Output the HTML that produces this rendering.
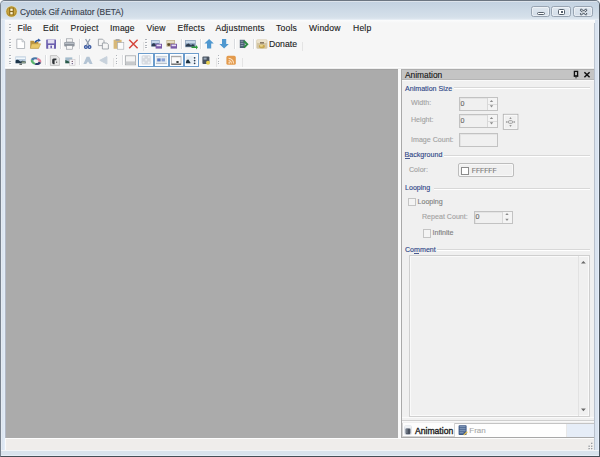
<!DOCTYPE html>
<html><head><meta charset="utf-8">
<style>
*{margin:0;padding:0;box-sizing:border-box}
html,body{width:600px;height:457px;overflow:hidden;background:#fff}
body{position:relative;font-family:"Liberation Sans",sans-serif}
.a{position:absolute}
.tx{white-space:nowrap;line-height:1;-webkit-text-stroke:.12px currentColor}
#win{left:0;top:0;width:600px;height:457px;background:#d6e1ec;border-radius:4px 4px 0 0}
#title{left:20px;top:7.5px;font-size:8.4px;color:#37404c}
.cb{top:6.2px;height:11px;border:1px solid #98a4b2;border-radius:2.5px;background:linear-gradient(#dfe7ef,#d3dde8);box-shadow:inset 0 0 0 1px rgba(255,255,255,.45)}
#client{left:5px;top:20px;width:589px;height:430px;background:#f6f6f6}
.menu{top:23.7px;font-size:8.6px;letter-spacing:.18px;color:#1b1b1b}
#mdi{left:6px;top:69px;width:392px;height:369px;background:#ababab;border-top:1px solid #a2a2a2}
#panel{left:401px;top:69px;width:193px;height:369px;background:#f0f0f0;border-left:1px solid #a9a9a9}
#phead{left:402px;top:69px;width:192px;height:11px;background:#c4c4c4;border-top:1px solid #adadad;border-bottom:1px solid #b5b5b5;box-shadow:0 1px 0 #f9f9f9}
#status{left:5px;top:438px;width:589px;height:12px;background:#efedeb;border-top:1px solid #fcfcfc;border-left:1px solid #fafafa}
.t7{font-size:7.1px}
.gh{color:#2d4586}
.lb{color:#a2a2a2}
.inp{border:1px solid #c2c2c2;background:#f0f0f0;box-shadow:inset 1px 1px 0 #e4e4e4}
.gl{height:2px;border-top:1px solid #d8d8d8;border-bottom:1px solid #fff}
.dot{width:1.8px;height:1.4px;background:#b0b4ba;box-shadow:.8px .8px 0 #fff}
.sep{width:1px;background:#dadcdf;box-shadow:1px 0 0 #fff}
.tb{top:53px;height:14px;border:1px solid #6b9ccc;background:#f2f7fc;box-shadow:inset 0 0 0 1px #fdfeff}
.tend{width:1px;background:#e4e4e4}
</style></head><body>
<div id="win" class="a"></div>
<!-- frame -->
<div class="a" style="left:0;top:0;width:600px;height:457px;border:1px solid #7a8490;border-top-color:#6c7682;border-right-color:#4e5760;border-bottom-color:#464e56;border-radius:5px 5px 0 0"></div>
<div class="a" style="left:1px;top:1px;width:598px;height:18px;background:linear-gradient(#dde4ec 0,#dde4ec 1px,#c3d2e1 1px,#d5e0ea 16px,#dde6ef 18px);border-radius:4px 4px 0 0"></div>
<div class="a" style="left:1px;top:19px;width:598px;height:1px;background:#e6edf4"></div>
<div class="a" style="left:1px;top:20px;width:4px;height:431px;background:linear-gradient(90deg,#e6ecf3 0,#e6ecf3 1px,#d9e3ef 1px,#e4eef9 4px)"></div>
<div class="a" style="left:594px;top:20px;width:5px;height:431px;background:linear-gradient(90deg,#bcc5d1 0,#bcc5d1 1px,#d9e3ef 1px,#d9e3ef 4px,#e6eefa 4px)"></div>
<div class="a" style="left:1px;top:450px;width:598px;height:6px;background:linear-gradient(#f3f5f8 0,#f3f5f8 1px,#d9e3ed 1px,#d9e3ed 5px,#e6eef6 5px)"></div>

<!-- app icon -->
<svg class="a" style="left:5px;top:5px" width="13" height="13" viewBox="0 0 13 13">
<circle cx="6.5" cy="6.5" r="6" fill="#efe2a8" opacity=".6"/>
<circle cx="6.5" cy="6.5" r="5.3" fill="#b08c2a"/>
<circle cx="6.5" cy="6.5" r="4.2" fill="#c9a640"/>
<rect x="4.2" y="2.8" width="4.6" height="7.4" fill="#8a6a18"/>
<rect x="5.3" y="3.6" width="2.4" height="2.3" fill="#fff6d2"/>
<rect x="5.3" y="7.1" width="2.4" height="2.3" fill="#fff6d2"/>
</svg>
<div id="title" class="a tx">Cyotek Gif Animator (BETA)</div>
<div class="a cb" style="left:530.5px;width:19px"><div class="a" style="left:5px;top:4.6px;width:8px;height:3px;border:1px solid #55606c;border-radius:1.5px;background:#fff"></div></div>
<div class="a cb" style="left:551.3px;width:20px"><div class="a" style="left:5.7px;top:1.6px;width:7.5px;height:6.2px;border:1.2px solid #55606c;border-radius:1.5px;background:#fff"></div><div class="a" style="left:8.3px;top:4.2px;width:2.4px;height:1.4px;background:#55606c"></div></div>
<div class="a cb" style="left:573px;width:20px"><svg class="a" style="left:4.6px;top:1.2px" width="10" height="8" viewBox="0 0 10 8"><path d="M2.2 2 L7 6 M7 2 L2.2 6" stroke="#55606c" stroke-width="2.6" stroke-linecap="round"/><path d="M2.2 2 L7 6 M7 2 L2.2 6" stroke="#eef1f4" stroke-width="1" stroke-linecap="round"/></svg></div>

<div id="client" class="a"></div>
<div class="a" style="left:5px;top:20px;width:590px;height:3px;background:linear-gradient(#fbfcfd,#f6f6f6)"></div>
<!-- menu -->
<div class="a dot" style="left:9px;top:24px"></div>
<div class="a dot" style="left:9px;top:27px"></div>
<div class="a dot" style="left:9px;top:29.5px"></div>
<div class="a tx menu" style="left:17.5px">File</div>
<div class="a tx menu" style="left:43px">Edit</div>
<div class="a tx menu" style="left:70.5px">Project</div>
<div class="a tx menu" style="left:110px">Image</div>
<div class="a tx menu" style="left:146.5px">View</div>
<div class="a tx menu" style="left:177.5px">Effects</div>
<div class="a tx menu" style="left:215.5px">Adjustments</div>
<div class="a tx menu" style="left:276px">Tools</div>
<div class="a tx menu" style="left:309px">Window</div>
<div class="a tx menu" style="left:353px">Help</div>

<!-- toolbar grips -->
<div class="a dot" style="left:9px;top:39px"></div>
<div class="a dot" style="left:9px;top:42px"></div>
<div class="a dot" style="left:9px;top:44.5px"></div>
<div class="a dot" style="left:9px;top:47px"></div>
<div class="a dot" style="left:9px;top:55px"></div>
<div class="a dot" style="left:9px;top:58px"></div>
<div class="a dot" style="left:9px;top:60.5px"></div>
<div class="a dot" style="left:9px;top:63px"></div>
<div class="a dot" style="left:145px;top:39px"></div>
<div class="a dot" style="left:145px;top:42px"></div>
<div class="a dot" style="left:145px;top:44.5px"></div>
<div class="a dot" style="left:145px;top:47px"></div>
<div class="a dot" style="left:115.5px;top:55px"></div>
<div class="a dot" style="left:115.5px;top:58px"></div>
<div class="a dot" style="left:115.5px;top:60.5px"></div>
<div class="a dot" style="left:115.5px;top:63px"></div>
<div class="a dot" style="left:217.5px;top:55px"></div>
<div class="a dot" style="left:217.5px;top:58px"></div>
<div class="a dot" style="left:217.5px;top:60.5px"></div>
<div class="a dot" style="left:217.5px;top:63px"></div>
<!-- separators -->
<div class="a sep" style="left:60px;top:39px;height:10px"></div>
<div class="a sep" style="left:79px;top:39px;height:10px"></div>
<div class="a sep" style="left:181px;top:39px;height:10px"></div>
<div class="a sep" style="left:200px;top:39px;height:10px"></div>
<div class="a sep" style="left:234px;top:39px;height:10px"></div>
<div class="a sep" style="left:253px;top:39px;height:10px"></div>
<div class="a tend" style="left:143px;top:42px;height:9px"></div>
<div class="a tend" style="left:302px;top:42px;height:9px"></div>
<div class="a sep" style="left:45px;top:55px;height:10px"></div>
<div class="a sep" style="left:79px;top:55px;height:10px"></div>
<div class="a sep" style="left:121.5px;top:55px;height:10px"></div>
<div class="a tend" style="left:112.5px;top:58px;height:9px"></div>
<div class="a tend" style="left:215.5px;top:58px;height:9px"></div>
<div class="a tend" style="left:241.5px;top:58px;height:9px"></div>

<!-- toolbar icons (page coords) -->
<svg class="a" style="left:0;top:0" width="310" height="69" viewBox="0 0 310 69">
<!-- new -->
<path d="M16.8 39.2 H22 L24.6 41.8 V48.5 H16.8 Z" fill="#fff" stroke="#a4a9b0" stroke-width=".8"/>
<path d="M22 39.2 V41.8 H24.6" fill="#e6e8ec" stroke="#a4a9b0" stroke-width=".6"/>
<!-- open -->
<path d="M30.3 40.8 H33.6 L34.4 41.8 H38.4 V48.3 H30.3 Z" fill="#b8923e"/>
<path d="M31.6 43.8 H40.6 L38.6 48.4 H30.3 Z" fill="#e9c868" stroke="#b08a3a" stroke-width=".5"/>
<path d="M35.2 42.6 Q36 40.2 38.8 40.2" stroke="#28529c" stroke-width="1.4" fill="none"/>
<path d="M38 38.6 L40.8 40.2 L38.4 42 Z" fill="#28529c"/>
<!-- save -->
<rect x="46.2" y="39.4" width="9.8" height="9.4" rx=".6" fill="#6b5eae"/>
<rect x="47.8" y="39.6" width="6.6" height="3.8" fill="#e2def0"/>
<rect x="48.2" y="45" width="5.8" height="3.8" fill="#efedf5"/>
<rect x="50.4" y="45.6" width="1.6" height="2.6" fill="#6b5eae"/>
<!-- print -->
<rect x="66.5" y="38.8" width="5.8" height="3.2" fill="#f4f4f4" stroke="#8a9098" stroke-width=".6"/>
<rect x="64.2" y="42" width="10.4" height="4.6" rx="1" fill="#8c939c"/>
<rect x="65" y="42.6" width="8.8" height="1.4" fill="#b8bec6"/>
<rect x="66.3" y="45.6" width="6.2" height="3.6" fill="#f6f6f6" stroke="#8a9098" stroke-width=".6"/>
<!-- cut -->
<path d="M85.6 39 L89 45 M90 39 L86.6 45" stroke="#8a96a8" stroke-width="1.2"/>
<circle cx="85.9" cy="46.9" r="2" fill="#2f4f9a"/>
<circle cx="89.5" cy="46.9" r="2" fill="#2f4f9a"/>
<circle cx="85.9" cy="47.1" r=".8" fill="#c8d4ee"/>
<circle cx="89.5" cy="47.1" r=".8" fill="#c8d4ee"/>
<!-- copy -->
<path d="M98.4 39.2 H102.6 L104 40.6 V45.6 H98.4 Z" fill="#f6f6f6" stroke="#8e949c" stroke-width=".8"/>
<path d="M102.4 43 H106.8 L108.4 44.6 V49 H102.4 Z" fill="#f6f6f6" stroke="#8e949c" stroke-width=".8"/>
<!-- paste -->
<rect x="113.6" y="39.8" width="8" height="9" fill="#d8b878"/>
<rect x="115.6" y="39" width="4" height="2" fill="#a8a8a8"/>
<rect x="117.4" y="42.6" width="6.4" height="6.6" fill="#fbfbfb" stroke="#a0a6ae" stroke-width=".6"/>
<!-- delete -->
<path d="M129.2 39.8 L137.6 48.2 M137.6 39.8 L129.2 48.2" stroke="#d4443a" stroke-width="1.45"/>
<!-- img save -->
<rect x="151.2" y="40" width="8.4" height="6.6" fill="#7e98b8"/>
<rect x="151.8" y="40.6" width="7.2" height="2.4" fill="#c8d8ea"/>
<path d="M151.6 44.5 L154 43 L156 45 L158 43.6 L159.2 46.2 H151.6Z" fill="#2c3c52"/>
<rect x="155.6" y="43.8" width="6.4" height="4.8" fill="#7a5aa8"/>
<rect x="156.6" y="44.6" width="4.4" height="1.6" fill="#e8e0f4"/>
<!-- img save as -->
<rect x="166.5" y="40" width="8.4" height="6.6" fill="#b8a880"/>
<rect x="167.1" y="40.6" width="7.2" height="2.4" fill="#e4dcc4"/>
<circle cx="168.8" cy="44.6" r="1.4" fill="#5a4a2a"/>
<rect x="170.6" y="43.8" width="6.4" height="4.8" fill="#7a5aa8"/>
<rect x="171.6" y="44.6" width="4.4" height="1.6" fill="#e8e0f4"/>
<!-- export -->
<rect x="185.2" y="40" width="10.4" height="7.2" fill="#7890ac"/>
<rect x="185.8" y="40.6" width="9.2" height="2.8" fill="#c8d8e8"/>
<path d="M185.8 45 L188.5 43.6 L191 45.6 L193 44 L195 46.6 H185.8Z" fill="#2a3a4c"/>
<path d="M191.5 46.5 H196 V45 L198 47.3 L196 49.4 V48 H191.5Z" fill="#2c9a3a"/>
<!-- up -->
<path d="M209.1 39 L213.8 43.6 H211.2 V48.6 H207 V43.6 H204.4 Z" fill="#4f98d0"/>
<!-- down -->
<path d="M224.1 48.6 L228.8 44 H226.2 V39 H222 V44 H219.4 Z" fill="#4f98d0"/>
<!-- goto -->
<rect x="239.8" y="39.8" width="5" height="8.2" fill="#4c6076"/>
<path d="M240.6 41.2 H243.4 M240.6 43.4 H243.4 M240.6 45.6 H243.4" stroke="#a4b4c4" stroke-width=".8"/>
<path d="M244 41 L247.2 44.2 L244 47.6" fill="none" stroke="#2e8c44" stroke-width="2"/>
<!-- donate -->
<rect x="256.4" y="39.4" width="11" height="9.4" rx="1.4" fill="#d4c6a4"/>
<rect x="257" y="40" width="9.8" height="3" rx="1" fill="#ebe2cc"/>
<rect x="260" y="42" width="4" height="1.6" fill="#8a7a62"/>
<ellipse cx="261.9" cy="46.4" rx="3" ry="1.8" fill="#c8a850"/>
<ellipse cx="261.4" cy="45.8" rx="1.6" ry="1" fill="#e8d488"/>
<!-- row 2 -->
<rect x="15.4" y="56.4" width="10.4" height="6.8" fill="#b8cadc"/>
<rect x="16" y="57.4" width="9.2" height="1.6" fill="#f2f8fc"/>
<path d="M15.6 63.2 V60.6 Q16.6 59.2 18.4 60 L20.4 61.4 L22.6 60.8 L25.6 61.6 V63.2Z" fill="#1c3448"/>
<rect x="21.6" y="61.4" width="4" height="1.8" fill="#8a9a84"/>
<rect x="19.4" y="63.4" width="2.6" height="1.6" fill="#6a726e"/>
<!-- color ring -->
<g transform="translate(36 61.2) rotate(15) scale(1 .7)">
<circle r="4" fill="none" stroke="#2a3c6c" stroke-width="2.8" stroke-dasharray="6.3 20"/>
<circle r="4" fill="none" stroke="#5ab46e" stroke-width="2.8" stroke-dasharray="6.3 20" stroke-dashoffset="-6.3"/>
<circle r="4" fill="none" stroke="#4a78a8" stroke-width="2.8" stroke-dasharray="6.3 20" stroke-dashoffset="-12.6"/>
<circle r="4" fill="none" stroke="#e0849c" stroke-width="2.8" stroke-dasharray="6.3 20" stroke-dashoffset="-18.9"/>
</g>
<!-- doc dark -->
<path d="M50.4 55.6 H56.8 L59.4 58.2 V65.4 H50.4Z" fill="#e8e8e8" stroke="#a8a8a8" stroke-width=".6"/>
<path d="M56.4 58.4 H53.6 Q52.2 58.4 52.2 60 V62.8 Q52.2 64.2 53.6 64.2 H54.6 V60.2 H56.4Z" fill="#2e3236"/>
<rect x="56" y="61.6" width="1.2" height="1.2" fill="#5a5a5a"/>
<!-- small image -->
<rect x="65.3" y="57.4" width="7" height="5.8" fill="#a4bccc"/>
<path d="M65.3 60 L69 61.6 L71.5 63.2 H65.3Z" fill="#2a5a48"/>
<rect x="69.6" y="59.6" width="5.4" height="5.6" fill="#f6f4f6" stroke="#c4c0c4" stroke-width=".5"/>
<circle cx="72.3" cy="61.4" r=".7" fill="#7a5a6a"/>
<circle cx="72.3" cy="63.6" r=".7" fill="#5a4a7a"/>
<!-- flip A -->
<path d="M86.6 56.8 H89.4 L92.6 64 H89.8 L88 61.6 L86.2 64 H83.4Z" fill="#b4c4d4"/>
<!-- left tri -->
<path d="M99.8 60.3 L106.9 56.6 V64 Z" fill="#c8d2dc" stroke="#c8d2dc" stroke-width="1" stroke-linejoin="round"/>
<!-- frame -->
<rect x="125.4" y="55.8" width="10.2" height="9" fill="#f4f4f4" stroke="#a4a8ac" stroke-width=".8"/>
<rect x="125.8" y="61.4" width="9.4" height="3" fill="#c8cacc"/>
</svg>

<!-- highlighted toggle buttons -->
<div class="a tb" style="left:138.3px;width:15.3px"></div>
<div class="a tb" style="left:153.6px;width:15.1px"></div>
<div class="a tb" style="left:168.7px;width:15.1px"></div>
<div class="a tb" style="left:183.8px;width:14.8px"></div>
<svg class="a" style="left:0;top:0" width="250" height="69" viewBox="0 0 250 69">
<rect x="141.6" y="55.2" width="9.2" height="9.2" rx="1.5" fill="#d6dae0"/>
<g fill="#eef1f4"><circle cx="143.6" cy="57.2" r="1"/><circle cx="148.8" cy="57.2" r="1"/><circle cx="146.2" cy="59.8" r="1"/><circle cx="143.6" cy="62.4" r="1"/><circle cx="148.8" cy="62.4" r="1"/></g>
<rect x="155.9" y="56" width="11" height="7.8" fill="#e2e8ee"/>
<rect x="155.9" y="56" width="11" height=".8" fill="#c4ccd4"/>
<rect x="155.9" y="63" width="11" height=".8" fill="#aeb8c2"/>
<rect x="157.2" y="58.4" width="3.4" height="3" fill="#5a7cc4"/>
<rect x="161.6" y="58.4" width="3.4" height="3" fill="#8aa4d8"/>
<rect x="171.4" y="56.2" width="9.6" height="8.3" fill="#fafafa" stroke="#9a9a9a" stroke-width=".6"/>
<rect x="171.4" y="56" width="9.6" height="1.2" fill="#a8a8a8"/>
<rect x="171.4" y="63.6" width="9.6" height="1" fill="#4a4a4a"/>
<rect x="176.4" y="61" width="2.2" height="2" fill="#3a4040"/>
<rect x="185.9" y="56.2" width="6.8" height="8" fill="#e4ecf2"/>
<path d="M185.9 62.2 Q186.4 59 188.4 59.6 L190.4 62.4 V63.2 H185.9Z" fill="#1e3240"/>
<circle cx="194.6" cy="57.8" r=".9" fill="#2a3e54"/><circle cx="194.6" cy="60.6" r=".9" fill="#2a3e54"/><circle cx="194.6" cy="63.3" r=".9" fill="#2a3e54"/>
<!-- dark w/ star -->
<rect x="202.4" y="56.4" width="7" height="7.6" rx="1" fill="#4a5460"/>
<rect x="203.6" y="57.6" width="3" height="2" fill="#9aa8b8"/>
<circle cx="208" cy="62.8" r="2" fill="#e8d050"/>
<!-- rss -->
<rect x="226.4" y="55.8" width="9.4" height="9" rx="1.6" fill="#e39a4c"/>
<path d="M228.6 58.4 A5 5 0 0 1 233.6 63.4 M228.6 60.6 A2.8 2.8 0 0 1 231.4 63.4" stroke="#fbe0c0" stroke-width="1.1" fill="none"/>
<circle cx="229.2" cy="62.8" r=".9" fill="#fbe0c0"/>
</svg>
<div class="a tx" style="left:269px;top:39.6px;font-size:8.7px;color:#1b1b1b">Donate</div>

<!-- MDI -->
<div class="a" style="left:5px;top:67px;width:589px;height:1px;background:#fdfdfd"></div><div class="a" style="left:5px;top:68px;width:589px;height:1px;background:#eeeeee"></div>
<div class="a" style="left:5px;top:69px;width:1px;height:369px;background:#b3b9c6"></div>
<div id="mdi" class="a"></div>
<div class="a" style="left:398px;top:69px;width:3px;height:369px;background:#fafafa"></div>

<!-- panel -->
<div id="panel" class="a"></div>
<div class="a" style="left:594px;top:69px;width:1px;height:369px;background:#b8c0cc"></div>
<div id="phead" class="a"></div>
<div class="a tx" style="left:405px;top:70.6px;font-size:8.4px;color:#151515">Animation</div>
<svg class="a" style="left:570px;top:69px" width="24" height="11" viewBox="0 0 24 11">
<rect x="4.4" y="2.4" width="3.2" height="4.6" fill="none" stroke="#111" stroke-width="1.3"/>
<rect x="3.8" y="6.6" width="4.4" height="1" fill="#111"/>
<rect x="5.5" y="7.4" width="1" height="2" fill="#333"/>
<path d="M14.4 3.2 L19.6 8.2 M19.6 3.2 L14.4 8.2" stroke="#111" stroke-width="1.5"/>
</svg>

<div class="a tx t7 gh" style="left:405px;top:85.6px">Animation Size</div>
<div class="a gl" style="left:454px;top:87px;width:136px"></div>
<div class="a tx t7 lb" style="left:411px;top:99.5px">Width:</div>
<div class="a tx t7 lb" style="left:411px;top:117px">Height:</div>
<div class="a tx t7 lb" style="left:411px;top:137px">Image Count:</div>
<div class="a inp" style="left:459px;top:97px;width:38.5px;height:14px"></div>
<div class="a inp" style="left:459px;top:114px;width:38.5px;height:14px"></div>
<div class="a inp" style="left:459px;top:133px;width:38.5px;height:14px"></div>
<div class="a tx t7" style="left:460.5px;top:100.5px;color:#666">0</div>
<div class="a tx t7" style="left:460.5px;top:117.5px;color:#666">0</div>
<div class="a" style="left:487px;top:98px;width:10px;height:12px;border-left:1px solid #d8d8d8;background:#f4f4f4"></div>
<div class="a" style="left:487px;top:115px;width:10px;height:12px;border-left:1px solid #d8d8d8;background:#f4f4f4"></div>
<div class="a" style="left:488px;top:103.5px;width:9px;height:1px;background:#dcdcdc"></div>
<div class="a" style="left:488px;top:120.5px;width:9px;height:1px;background:#dcdcdc"></div>
<svg class="a" style="left:484px;top:95px" width="40" height="40" viewBox="0 0 40 40">
<path d="M5.8 7 L7.5 4.9 L9.2 7Z M5.8 10.3 L7.5 12.4 L9.2 10.3Z M5.8 24 L7.5 21.9 L9.2 24Z M5.8 27.3 L7.5 29.4 L9.2 27.3Z" fill="#8c8c8c"/>
<rect x="19.3" y="19.3" width="14.6" height="15" fill="#f0f0f0" stroke="#b0b0b0" stroke-width=".9"/>
<rect x="20.3" y="20.3" width="12.6" height="13" fill="none" stroke="#fbfbfb" stroke-width=".8"/>
<path d="M22.6 27 H30.6" stroke="#c4c4c4" stroke-width=".7"/>
<rect x="24.4" y="25.6" width="4.2" height="2.8" rx="1.2" fill="#e8e8e8" stroke="#8a8a8a" stroke-width=".7"/>
<path d="M25.3 23.8 L26.5 22.2 L27.7 23.8Z M25.3 30.2 L26.5 31.8 L27.7 30.2Z M23.2 25.9 L21.8 27 L23.2 28.1Z M29.8 25.9 L31.2 27 L29.8 28.1Z" fill="#7a7a7a"/>
</svg>

<div class="a tx t7 gh" style="left:404.5px;top:152px">Background</div>
<div class="a" style="left:405px;top:158.4px;width:4.5px;height:.6px;background:#4a5a90"></div>
<div class="a gl" style="left:444px;top:154.5px;width:146px"></div>
<div class="a tx t7 lb" style="left:409px;top:167px">Color:</div>
<div class="a" style="left:458px;top:163px;width:56px;height:14px;border:1px solid #bdbdbd;border-radius:2px;background:#f0f0f0;box-shadow:inset 0 0 0 1px #f8f8f8"></div>
<div class="a" style="left:461px;top:167px;width:8px;height:8px;border:1px solid #8c8c8c;background:#fff"></div>
<div class="a tx" style="left:471.8px;top:168.2px;font-size:6.75px;color:#7a7a7a">FFFFFF</div>

<div class="a tx t7 gh" style="left:405px;top:185.2px">Looping</div>
<div class="a gl" style="left:434px;top:187.5px;width:156px"></div>
<div class="a" style="left:407.5px;top:197.5px;width:8.5px;height:8.5px;border:1px solid #c4c4c4;background:#f4f4f4"></div>
<div class="a tx t7" style="left:417.5px;top:199.2px;color:#7e7e7e">Looping</div>
<div class="a tx t7 lb" style="left:422px;top:214.4px">Repeat Count:</div>
<div class="a inp" style="left:474px;top:210.5px;width:38.5px;height:13.5px"></div>
<div class="a tx t7" style="left:475.5px;top:213.5px;color:#666">0</div>
<div class="a" style="left:502px;top:211.5px;width:10px;height:11.5px;border-left:1px solid #d8d8d8;background:#f4f4f4"></div>
<svg class="a" style="left:502px;top:211px" width="10" height="13" viewBox="0 0 10 13"><path d="M3.3 4 L5 1.9 L6.7 4Z M3.3 7.8 L5 9.9 L6.7 7.8Z" fill="#8c8c8c"/></svg>
<div class="a" style="left:422.5px;top:229px;width:8.5px;height:8.5px;border:1px solid #c4c4c4;background:#f4f4f4"></div>
<div class="a tx t7" style="left:432.5px;top:230.2px;color:#7e7e7e">Infinite</div>

<div class="a tx t7 gh" style="left:405px;top:246.5px">Comment</div>
<div class="a" style="left:414.2px;top:253.2px;width:4.8px;height:.6px;background:#4a5a90"></div>
<div class="a gl" style="left:437px;top:249px;width:153px"></div>
<div class="a" style="left:409px;top:255px;width:181px;height:162px;border:1px solid #cfcfcf;background:#f0f0f0;box-shadow:inset 0 0 0 1px #fafafa"></div>
<div class="a" style="left:577.5px;top:256px;width:1px;height:160px;background:#e2e2e2"></div>
<svg class="a" style="left:578px;top:256px" width="11" height="160" viewBox="0 0 11 160"><path d="M3 7.6 L5.4 5 L7.8 7.6Z M3 152.6 L5.4 155.2 L7.8 152.6Z" fill="#6a6a6a"/></svg>
<div class="a" style="left:402px;top:417px;width:192px;height:1px;background:#fafafa"></div>
<div class="a" style="left:402px;top:420px;width:192px;height:1px;background:#cfcfcf"></div>
<div class="a" style="left:402px;top:421px;width:192px;height:1px;background:#f8f8f8"></div>
<div class="a" style="left:402px;top:423px;width:192px;height:1px;background:#c4c4c4"></div>

<!-- tab strip -->
<div class="a" style="left:402px;top:424px;width:192px;height:13px;background:linear-gradient(90deg,#fdfdfd 0,#fdfdfd 165px,#e6edf7 165px)"></div>
<div class="a" style="left:402px;top:423px;width:53px;height:14px;background:#fdfdfd;border:1px solid #d4d4d4;border-top:none"></div>
<div class="a" style="left:455px;top:424px;width:112px;height:13px;background:#fefefe;border-right:1px solid #e8e8e8"></div>
<svg class="a" style="left:403px;top:424px" width="70" height="12" viewBox="0 0 70 12">
<rect x="1.2" y="1.2" width="7.6" height="9.8" rx="2" fill="#d8dde4"/>
<rect x="1.6" y="1.4" width="6.8" height="2.6" rx="1.2" fill="#eef1f4"/>
<rect x="2.6" y="4.4" width="4.8" height="5.8" rx="1.2" fill="#4a5260"/>
<rect x="3.4" y="5" width="1" height="4.4" fill="#8a94a0"/>
<rect x="55.6" y="1.2" width="8" height="9.8" rx=".8" fill="#3e5a86"/>
<path d="M56.6 2.8 H62.6 M56.6 4.8 H62.6 M56.6 6.8 H62.6 M56.6 8.8 H60.6" stroke="#a8bcd8" stroke-width=".8"/>
<path d="M60.2 10.8 L63.8 7.2 L64.8 8.2 L61.2 11.6Z" fill="#e6c050"/>
</svg>
<div class="a tx" style="left:415px;top:427.2px;font-size:8.6px;color:#222;-webkit-text-stroke:.35px #222">Animation</div>
<div class="a tx" style="left:469.3px;top:426.8px;font-size:8px;color:#a9a9a9">Fran</div>
<div class="a" style="left:402px;top:437px;width:192px;height:1px;background:#a8a8a8"></div>

<div id="status" class="a"></div>
<svg class="a" style="left:584px;top:440px" width="10" height="10" viewBox="0 0 10 10">
<g fill="#fbfbfb"><rect x="7.6" y="3.2" width="1.4" height="1.4"/><rect x="5" y="6.1" width="1.4" height="1.4"/><rect x="7.6" y="6.1" width="1.4" height="1.4"/><rect x="5" y="8.5" width="1.4" height="1.4"/><rect x="7.6" y="8.5" width="1.4" height="1.4"/></g>
<g fill="#8e9296"><rect x="7.1" y="2.7" width="1.3" height="1.3"/><rect x="4.5" y="5.6" width="1.3" height="1.3"/><rect x="7.1" y="5.6" width="1.3" height="1.3"/><rect x="4.5" y="8" width="1.3" height="1.3"/><rect x="7.1" y="8" width="1.3" height="1.3"/></g>
</svg>
</body></html>
